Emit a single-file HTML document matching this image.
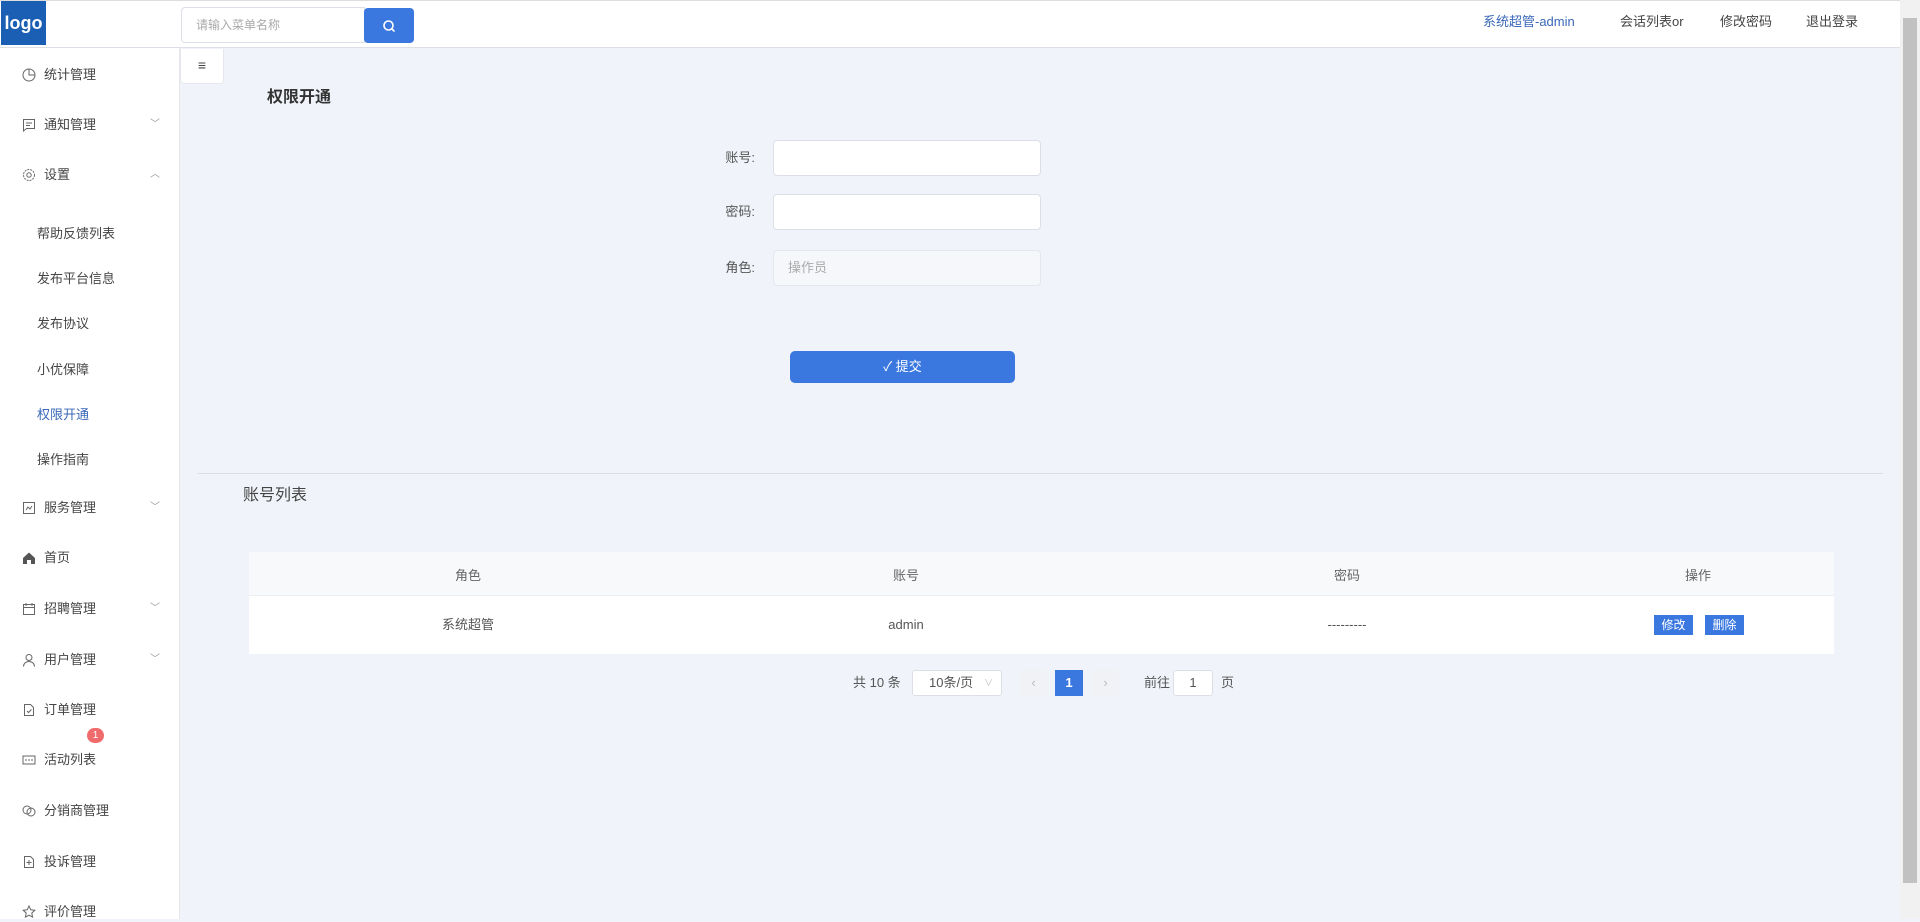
<!DOCTYPE html>
<html><head><meta charset="utf-8"><style>
*{margin:0;padding:0;box-sizing:border-box}
body{width:1920px;height:919px;overflow:hidden;background:#f0f4fa;font-family:"Liberation Sans","Noto Sans CJK SC",sans-serif;font-size:13px;line-height:20px;color:#333;position:relative}
.a{position:absolute}
.hdr{left:0;top:0;width:1900px;height:48px;background:#fff;border-bottom:1px solid #dcdfe6;border-top:1px solid #ddd}
.logo{left:1px;top:1px;width:45px;height:44px;background:#1a5fb4;color:#fff;font-size:18px;font-weight:bold;line-height:44px;text-align:center}
.sb{left:0;top:48px;width:180px;height:871px;background:#fff;border-right:1px solid #e6e6e6}
.mi{left:0;width:180px;height:20px;line-height:20px;font-size:13px;color:#444}
.mi .ic{position:absolute;left:22px;top:3px;width:14px;height:14px}
.mi .t{position:absolute;left:44px}
.mi .ar{position:absolute;left:150px;top:0;color:#999;font-size:10px}
.sub{left:37px;font-size:13px;color:#444;line-height:20px}
.inp{background:#fff;border:1px solid #dcdfe6;border-radius:4px}
.lbl{width:60px;text-align:right;font-size:13px;color:#555}
</style></head><body>
<div class="a hdr"></div>
<div class="a logo">logo</div>
<div class="a inp" style="left:181px;top:7px;width:184px;height:36px;border-radius:4px 0 0 4px;color:#aaa;font-size:12px;line-height:34px;padding-left:14px">请输入菜单名称</div>
<div class="a" style="left:364px;top:8px;width:50px;height:35px;background:#3a78e0;border-radius:4px">
<svg class="a" style="left:17px;top:10px" width="16" height="16" viewBox="0 0 16 16"><circle cx="7.5" cy="7.5" r="4.5" fill="none" stroke="#fff" stroke-width="1.6"/><path d="M11 11l2.5 2.5" stroke="#fff" stroke-width="1.6"/></svg></div>
<div class="a" style="left:1483px;top:12px;color:#3a67b8;font-size:13px">系统超管-admin</div>
<div class="a" style="left:1620px;top:12px;font-size:13px;color:#444">会话列表or</div>
<div class="a" style="left:1720px;top:12px;font-size:13px;color:#444">修改密码</div>
<div class="a" style="left:1806px;top:12px;font-size:13px;color:#444">退出登录</div>
<div class="a" style="left:1900px;top:0;width:20px;height:919px;background:#f1f1f1"></div>
<div class="a" style="left:1903px;top:18px;width:14px;height:865px;background:#c1c1c1"></div>

<div class="a sb"></div>
<div class="a mi" style="top:65px"><svg class="ic" viewBox="0 0 14 14"><circle cx="7" cy="7" r="6" fill="none" stroke="#666"/><path d="M7 1v6h6" fill="none" stroke="#666"/></svg><span class="t">统计管理</span></div>
<div class="a mi" style="top:115px"><svg class="ic" viewBox="0 0 14 14"><path d="M1.5 1.5h11v9h-8l-3 2.5z M4 5h6M4 7.5h4" fill="none" stroke="#666"/></svg><span class="t">通知管理</span><span class="ar">﹀</span></div>
<div class="a mi" style="top:165px"><svg class="ic" viewBox="0 0 14 14"><circle cx="7" cy="7" r="5.5" fill="none" stroke="#666" stroke-dasharray="2 1"/><circle cx="7" cy="7" r="2.2" fill="none" stroke="#666"/></svg><span class="t">设置</span><span class="ar">︿</span></div>
<div class="a sub" style="top:224px">帮助反馈列表</div>
<div class="a sub" style="top:269px">发布平台信息</div>
<div class="a sub" style="top:314px">发布协议</div>
<div class="a sub" style="top:360px">小优保障</div>
<div class="a sub" style="top:405px;color:#3a67b8">权限开通</div>
<div class="a sub" style="top:450px">操作指南</div>
<div class="a mi" style="top:498px"><svg class="ic" viewBox="0 0 14 14"><rect x="1.5" y="1.5" width="11" height="11" fill="none" stroke="#666"/><path d="M4 9l2-3 2 2 2-3" fill="none" stroke="#666"/></svg><span class="t">服务管理</span><span class="ar">﹀</span></div>
<div class="a mi" style="top:548px"><svg class="ic" viewBox="0 0 14 14"><path d="M1 7L7 1.5 13 7v6H9V9H5v4H1z" fill="#555"/></svg><span class="t">首页</span></div>
<div class="a mi" style="top:599px"><svg class="ic" viewBox="0 0 14 14"><rect x="1.5" y="2.5" width="11" height="10" fill="none" stroke="#666"/><path d="M1.5 5.5h11M4 1v3M10 1v3" stroke="#666"/></svg><span class="t">招聘管理</span><span class="ar">﹀</span></div>
<div class="a mi" style="top:650px"><svg class="ic" viewBox="0 0 14 14"><circle cx="7" cy="4.5" r="3" fill="none" stroke="#666"/><path d="M1.5 13.5c0-3 2.5-5 5.5-5s5.5 2 5.5 5" fill="none" stroke="#666"/></svg><span class="t">用户管理</span><span class="ar">﹀</span></div>
<div class="a mi" style="top:700px"><svg class="ic" viewBox="0 0 14 14"><path d="M2.5 1.5h6l3 3v8h-9z M5 8l1.5 1.5L9.5 6.5" fill="none" stroke="#666"/></svg><span class="t">订单管理</span></div>
<div class="a" style="left:87px;top:728px;width:17px;height:15px;border-radius:8px;background:#f06c6c;color:#fff;font-size:10px;text-align:center;line-height:15px">1</div>
<div class="a mi" style="top:750px"><svg class="ic" viewBox="0 0 14 14"><rect x="1" y="3" width="12" height="8" fill="none" stroke="#666"/><path d="M4 6v2M7 6v2M10 6v2" stroke="#666"/></svg><span class="t">活动列表</span></div>
<div class="a mi" style="top:801px"><svg class="ic" viewBox="0 0 14 14"><circle cx="5" cy="6" r="4" fill="none" stroke="#666"/><circle cx="9" cy="8" r="4" fill="none" stroke="#666"/></svg><span class="t">分销商管理</span></div>
<div class="a mi" style="top:852px"><svg class="ic" viewBox="0 0 14 14"><path d="M2.5 1.5h6l3 3v8h-9z M7 5v5M4.5 7.5h5" fill="none" stroke="#666"/></svg><span class="t">投诉管理</span></div>
<div class="a mi" style="top:902px"><svg class="ic" viewBox="0 0 14 14"><path d="M7 1l1.8 3.8 4 .5-3 2.8.8 4L7 10.2 3.4 12.1l.8-4-3-2.8 4-.5z" fill="none" stroke="#666"/></svg><span class="t">评价管理</span></div>

<div class="a" style="left:180px;top:49px;width:44px;height:35px;background:#fff;border:1px solid #e4e7ed;border-top:none;border-radius:0 0 4px 4px;text-align:center;line-height:33px;font-size:14px;color:#444">≡</div>
<div class="a" style="left:267px;top:88px;font-size:16px;font-weight:bold;color:#333">权限开通</div>

<div class="a lbl" style="left:695px;top:148px">账号:</div>
<div class="a inp" style="left:773px;top:140px;width:268px;height:36px"></div>
<div class="a lbl" style="left:695px;top:202px">密码:</div>
<div class="a inp" style="left:773px;top:194px;width:268px;height:36px"></div>
<div class="a lbl" style="left:695px;top:258px">角色:</div>
<div class="a inp" style="left:773px;top:250px;width:268px;height:36px;background:#f5f7fa;border-color:#e4e7ed;color:#aaa;font-size:13px;line-height:34px;padding-left:14px">操作员</div>
<div class="a" style="left:790px;top:351px;width:225px;height:32px;background:#3a78e0;border-radius:5px;color:#fff;text-align:center;line-height:32px;font-size:13px">✓ 提交</div>

<div class="a" style="left:198px;top:473px;width:1685px;height:1px;background:#d8dce3"></div>
<div class="a" style="left:243px;top:486px;font-size:16px;color:#444">账号列表</div>

<div class="a" style="left:249px;top:552px;width:1585px;height:102px;background:#fff"></div>
<div class="a" style="left:249px;top:552px;width:1585px;height:44px;background:#f7f9fb;border-bottom:1px solid #ebeef5"></div>
<div class="a" style="left:438px;top:566px;width:60px;text-align:center;color:#666">角色</div>
<div class="a" style="left:876px;top:566px;width:60px;text-align:center;color:#666">账号</div>
<div class="a" style="left:1317px;top:566px;width:60px;text-align:center;color:#666">密码</div>
<div class="a" style="left:1668px;top:566px;width:60px;text-align:center;color:#666">操作</div>
<div class="a" style="left:418px;top:615px;width:100px;text-align:center;color:#555">系统超管</div>
<div class="a" style="left:856px;top:615px;width:100px;text-align:center;color:#555">admin</div>
<div class="a" style="left:1297px;top:615px;width:100px;text-align:center;color:#555">---------</div>
<div class="a" style="left:1654px;top:615px;width:39px;height:20px;background:#3a78e0;color:#fff;font-size:12px;text-align:center;line-height:20px">修改</div>
<div class="a" style="left:1705px;top:615px;width:39px;height:20px;background:#3a78e0;color:#fff;font-size:12px;text-align:center;line-height:20px">删除</div>

<div class="a" style="left:853px;top:673px;color:#555;font-size:13px">共 10 条</div>
<div class="a inp" style="left:912px;top:670px;width:90px;height:26px;border-radius:3px;font-size:13px;line-height:24px;padding-left:16px;color:#555">10条/页<span style="position:absolute;right:8px;color:#bbb;font-size:9px">∨</span></div>
<div class="a" style="left:1020px;top:670px;width:27px;height:26px;background:#f0f2f5;color:#bbb;text-align:center;line-height:26px">‹</div>
<div class="a" style="left:1055px;top:670px;width:28px;height:26px;background:#3a78e0;color:#fff;text-align:center;line-height:26px;font-weight:bold">1</div>
<div class="a" style="left:1092px;top:670px;width:27px;height:26px;background:#f0f2f5;color:#bbb;text-align:center;line-height:26px">›</div>
<div class="a" style="left:1144px;top:673px;color:#555">前往</div>
<div class="a inp" style="left:1173px;top:670px;width:40px;height:26px;border-radius:3px;text-align:center;line-height:24px;color:#555">1</div>
<div class="a" style="left:1221px;top:673px;color:#555">页</div>
</body></html>
